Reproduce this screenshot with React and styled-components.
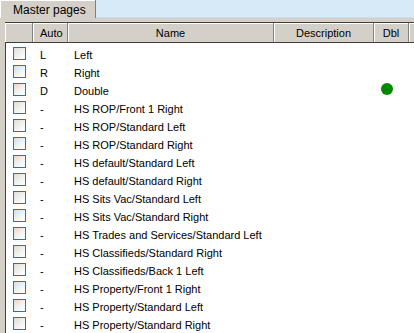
import React from 'react'
import styled, { createGlobalStyle } from 'styled-components'

const GlobalStyle = createGlobalStyle`
  html, body {
    margin: 0;
    padding: 0;
    background: #d4d0c8;
    font-family: "Liberation Sans", Arial, sans-serif;
    font-size: 11px;
    color: #000;
    overflow: hidden;
  }
`

const rows = [
    { auto: 'L', name: 'Left' },
    { auto: 'R', name: 'Right' },
    { auto: 'D', name: 'Double', dbl: true },
    { auto: '-', name: 'HS ROP/Front 1 Right' },
    { auto: '-', name: 'HS ROP/Standard Left' },
    { auto: '-', name: 'HS ROP/Standard Right' },
    { auto: '-', name: 'HS default/Standard Left' },
    { auto: '-', name: 'HS default/Standard Right' },
    { auto: '-', name: 'HS Sits Vac/Standard Left' },
    { auto: '-', name: 'HS Sits Vac/Standard Right' },
    { auto: '-', name: 'HS Trades and Services/Standard Left' },
    { auto: '-', name: 'HS Classifieds/Standard Right' },
    { auto: '-', name: 'HS Classifieds/Back 1 Left' },
    { auto: '-', name: 'HS Property/Front 1 Right' },
    { auto: '-', name: 'HS Property/Standard Left' },
    { auto: '-', name: 'HS Property/Standard Right' },
]

const COLS = '28px 35px 206px 100px 35px 1fr'

export default function App() {
    return (
        <Window>
            <GlobalStyle />
            <TabStrip>
                <Tab>Master pages</Tab>
                <TabFiller />
            </TabStrip>
            <Panel>
                <HeaderRow>
                    <HeadCell />
                    <HeadCell>Auto</HeadCell>
                    <HeadCell center>Name</HeadCell>
                    <HeadCell center>Description</HeadCell>
                    <HeadCell center>Dbl</HeadCell>
                    <HeadCell />
                </HeaderRow>
                <Body>
                    {rows.map((r, i) => (
                        <Row key={i}>
                            <CheckCell><Check /></CheckCell>
                            <Cell pad={7}>{r.auto}</Cell>
                            <Cell pad={6}>{r.name}</Cell>
                            <Cell />
                            <Cell pad={7}>{r.dbl && <Dot />}</Cell>
                            <Cell />
                        </Row>
                    ))}
                </Body>
            </Panel>
        </Window>
    )
}

const Window = styled.div`
    width: 414px;
    height: 333px;
    display: flex;
    flex-direction: column;
    overflow: hidden;
`

const TabStrip = styled.div`
    display: flex;
    height: 18px;
`

const Tab = styled.div`
    width: 82px;
    padding-left: 13px;
    padding-top: 1px;
    display: flex;
    align-items: center;
    font-size: 12px;
    background: #d4d0c8;
    border-right: 1px solid #808080;
    box-shadow: inset 1px 1px 0 #fff;
`

const TabFiller = styled.div`
    flex: 1;
    background: #d7eaf8;
    border-bottom: 1px solid #c8dcea;
`

const Panel = styled.div`
    flex: 1;
    margin: 4px 0 0 5px;
    border-top: 1px solid #404040;
    border-left: 1px solid #404040;
    display: flex;
    flex-direction: column;
    background: #fff;
`

const HeaderRow = styled.div`
    display: grid;
    grid-template-columns: ${COLS};
    height: 19px;
    margin-left: -1px;
    border-bottom: 1px solid #404040;
`

const HeadCell = styled.div`
    display: flex;
    align-items: center;
    justify-content: ${p => (p.center ? 'center' : 'flex-start')};
    padding-left: ${p => (p.center ? 0 : 7)}px;
    padding-top: 1px;
    background: #d4d0c8;
    border-right: 1px solid #808080;
    box-shadow: inset 1px 0 0 #fff, inset 0 1px 0 #fff;
    overflow: hidden;
    white-space: nowrap;
`

const Body = styled.div`
    display: flex;
    flex-direction: column;
    padding-top: 1px;
`

const Row = styled.div`
    display: grid;
    grid-template-columns: ${COLS};
    height: 18px;
    margin-left: -1px;
`

const Cell = styled.div`
    display: flex;
    align-items: center;
    padding-left: ${p => p.pad || 0}px;
    padding-top: 3px;
    white-space: nowrap;
    overflow: hidden;
`

const CheckCell = styled.div`
    display: flex;
    align-items: center;
    padding-left: 8px;
`

const Check = styled.span`
    width: 11px;
    height: 11px;
    border: 1px solid #2376b4;
    background: linear-gradient(135deg, #dcdcd7 0%, #f4f4f2 60%, #ffffff 100%);
`

const Dot = styled.span`
    width: 12px;
    height: 12px;
    margin-top: -3px;
    border-radius: 50%;
    background: #008800;
`
